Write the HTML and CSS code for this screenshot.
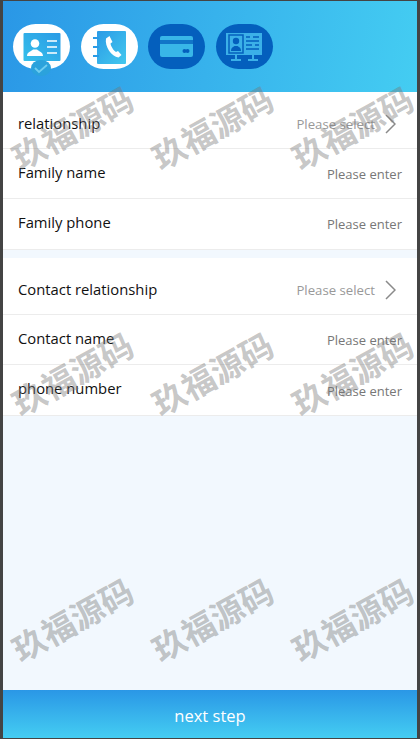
FILE: index.html
```html
<!DOCTYPE html>
<html lang="en">
<head>
<meta charset="utf-8">
<title>Contacts</title>
<link rel="stylesheet" href="styles.css">
</head>
<body>
<div class="frame">
  <header class="steps">
    <div class="step step-on">
      <svg class="ico" viewBox="0 0 38 30" width="38" height="30"><defs><linearGradient id="g1" x1="0" y1="0" x2="1" y2="1"><stop offset="0" stop-color="#2a9be6"/><stop offset="1" stop-color="#43c8ee"/></linearGradient><linearGradient id="g2" x1="0" y1="1" x2="1" y2="0"><stop offset="0" stop-color="#36c0ea"/><stop offset="1" stop-color="#2a9be6"/></linearGradient></defs><rect x="0.500" y="1" width="37" height="28" rx="1" fill="url(#g2)"/><circle cx="12" cy="11.500" r="4.300" fill="#fff"/><path d="M4 24c0-4 4-4.500 6-6.500h4c2 2 6 2.500 6 6.500z" fill="#fff"/><path d="M24 9h10M24 15h10M24 21h10" stroke="#fff" stroke-width="1.600"/></svg>
      <svg class="check" viewBox="0 0 20 16" width="20" height="16"><ellipse cx="10" cy="8" rx="10" ry="8" fill="#2ba2dc"/><path d="M4 8l4 4 8-7" fill="none" stroke="#6fcdf0" stroke-width="1.800"/></svg>
    </div>
    <div class="step step-on">
      <svg class="ico" viewBox="0 0 38 38" width="38" height="38"><rect x="7" y="3" width="29" height="33" rx="1" fill="url(#g1)"/><path d="M3 10h6M3 19h6M3 28h6" stroke="#2a9be6" stroke-width="1.800" fill="none"/><path d="M16 10.500l3.500-2.500 3 6-2 1.500c.5 3 3 7 5.500 8.500l2-1 3.500 4-3 2.500c-7-1-14-11-12.500-19z" fill="#fff"/></svg>
    </div>
    <div class="step">
      <svg class="ico" viewBox="0 0 34 22" width="34" height="22"><rect y="0" width="33" height="21" rx="2" fill="#38b6e8"/><rect y="4" width="33" height="4" fill="#045fbd" opacity=".75"/><circle cx="24.500" cy="15" r="2" fill="#045fbd"/><circle cx="27.500" cy="15" r="2" fill="#045fbd"/></svg>
    </div>
    <div class="step">
      <svg class="ico" viewBox="0 0 38 30" width="38" height="30"><rect x="1" y="1" width="36" height="22" fill="#3bb0e8"/><rect x="4" y="3" width="14" height="18" fill="none" stroke="#045fbd" stroke-width="1.500"/><circle cx="11" cy="9" r="3.200" fill="#045fbd"/><path d="M6 19c0-4 2.500-4 3.500-5h3c1 1 3.500 1 3.500 5z" fill="#045fbd"/><path d="M21 5h4M28 5h6M21 9h13M21 13h6M30 13h4M21 17h13" stroke="#045fbd" stroke-width="1.500"/><path d="M11 23v4M6 28h10M28 23v4M23 28h10" stroke="#3bb0e8" stroke-width="2"/></svg>
    </div>
  </header>

  <main class="content">
    <section class="group">
      <div class="row row-select"><span class="label">relationship</span><span class="value select">Please select<svg class="chev" viewBox="0 0 12 20" width="12" height="20"><path d="M2 1l9 9-9 9" fill="none" stroke="#8a8a8a" stroke-width="1.500"/></svg></span></div>
      <div class="row"><span class="label">Family name</span><span class="value">Please enter</span></div>
      <div class="row row-last"><span class="label">Family phone</span><span class="value">Please enter</span></div>
    </section>
    <section class="group">
      <div class="row row-select"><span class="label">Contact relationship</span><span class="value select">Please select<svg class="chev" viewBox="0 0 12 20" width="12" height="20"><path d="M2 1l9 9-9 9" fill="none" stroke="#8a8a8a" stroke-width="1.500"/></svg></span></div>
      <div class="row"><span class="label">Contact name</span><span class="value">Please enter</span></div>
      <div class="row row-last"><span class="label">phone number</span><span class="value value-low">Please enter</span></div>
    </section>
  </main>

  <footer class="next">next step</footer>

  <div class="marks" aria-hidden="true">
    <span class="mark">玖福源码</span><span class="mark">玖福源码</span><span class="mark">玖福源码</span>
    <span class="mark">玖福源码</span><span class="mark">玖福源码</span><span class="mark">玖福源码</span>
    <span class="mark">玖福源码</span><span class="mark">玖福源码</span><span class="mark">玖福源码</span>
  </div>
</div>
</body>
</html>
```
FILE: styles.css
```css
* { box-sizing: border-box; }
html, body { margin: 0; height: 100%; }
body {
  background: #444;
  font-family: "Open Sans", "Noto Sans CJK SC", sans-serif;
  overflow: hidden;
}
.frame {
  position: relative;
  width: 420px;
  height: 739px;
  border-style: solid;
  border-color: #444;
  border-width: 1px 3px 1px 3px;
  background: #f2f8fe;
  display: flex;
  flex-direction: column;
}
.steps {
  height: 91px;
  flex: none;
  background: linear-gradient(100deg, #2a97e6, #44cdf2);
  display: flex;
  gap: 10.670px;
  padding: 23px 0 0 10px;
}
.step {
  position: relative;
  width: 57px;
  height: 45px;
  border-radius: 23px;
  background: #045fbd;
  display: flex;
  align-items: center;
  justify-content: center;
}
.step-on { background: #fff; }
.ico { filter: blur(.35px); }
.check { position: absolute; left: 18px; bottom: -7px; filter: blur(.4px); }
.content { flex: 1; }
.group { background: #fff; margin-bottom: 8px; border-bottom: 1px solid #ececec; }
.row {
  height: 50px;
  display: flex;
  align-items: center;
  justify-content: space-between;
  padding: 0 15px 4px;
  border-bottom: 1px solid #ececec;
  font-size: 14.800px;
  line-height: 20px;
}
.row-select { height: 57px; padding: 6px 21px 0 15px; }
.row-last { height: 50px; border-bottom: 0; }
.label { color: #111; }
.value { color: #777; font-size: 13px; display: flex; align-items: center; padding-top: 4px; }
.value-low { padding-top: 6px; }
.select { color: #999; font-size: 13.200px; padding-top: 2px; }
.chev { margin-left: 9px; }
.next {
  height: 48px;
  flex: none;
  background: linear-gradient(180deg, #2a97e6, #44cdf2);
  color: #fff;
  font-size: 16.500px;
  padding-top: 2px;
  display: flex;
  align-items: center;
  justify-content: center;
}
.marks {
  position: absolute;
  top: 0;
  left: -1.500px;
  display: grid;
  grid-template-columns: repeat(3, 140px);
  grid-auto-rows: 246px;
  padding-top: 3px;
  pointer-events: none;
}
.mark {
  place-self: center;
  transform: rotate(-29deg);
  color: rgba(120, 120, 120, .42);
  font-family: "Noto Sans CJK SC", sans-serif;
  font-weight: 700;
  font-size: 33px;
  line-height: 30px;
  white-space: nowrap;
}
```
